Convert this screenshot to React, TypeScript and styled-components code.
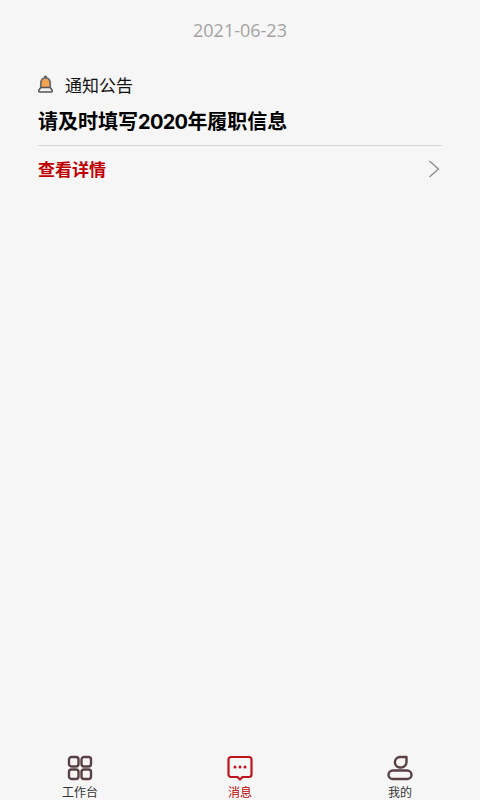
import React from 'react';
import styled, { createGlobalStyle } from 'styled-components';

const GlobalStyle = createGlobalStyle`
  html, body {
    margin: 0;
    padding: 0;
    height: 100%;
    background: #f6f6f6;
    font-family: "Noto Sans CJK SC", "Noto Sans", sans-serif;
  }
  #root {
    height: 100%;
  }
`;

const Page = styled.div`
  height: 800px;
  display: flex;
  flex-direction: column;
  background: #f6f6f6;
`;

const Content = styled.main`
  flex: 1;
  padding: 0 38px;
`;

const DateText = styled.div`
  padding-top: 17px;
  height: 26px;
  line-height: 26px;
  text-align: center;
  font-family: "Open Sans", sans-serif;
  font-size: 18px;
  color: #a3a3a3;
`;

const Notice = styled.section`
  margin-top: 28px;
`;

const NoticeHead = styled.div`
  display: flex;
  align-items: center;
  gap: 12px;
  height: 26px;
  font-size: 17px;
  color: #111;
`;

const NoticeTitle = styled.h2`
  margin: 12px 0 0;
  height: 26px;
  line-height: 26px;
  font-family: "Inter", "Noto Sans CJK SC", sans-serif;
  font-size: 20px;
  font-weight: 700;
  color: #000;
`;

const TitleDigits = styled.span`
  letter-spacing: -0.7px;
`;

const Detail = styled.div`
  margin-top: 10px;
  padding-top: 9px;
  border-top: 1px solid #d8d8d8;
  display: flex;
  align-items: center;
  justify-content: space-between;
  height: 26px;
  font-size: 17px;
  font-weight: 700;
  color: #c00000;

  svg {
    margin-top: 2px;
  }
`;

const TabBar = styled.nav`
  height: 45px;
  display: grid;
  grid-template-columns: repeat(3, 160px);
`;

const Tab = styled.div<{ $active?: boolean }>`
  display: flex;
  flex-direction: column;
  align-items: center;
  gap: 3px;
  font-size: 12px;
  line-height: 16px;
  color: ${(p) => (p.$active ? '#c00000' : '#333')};
`;

const BellIcon = () => (
  <svg width="15" height="18" viewBox="0 0 15 18">
    <circle cx="7.500" cy="2" r="1.600" fill="#555" />
    <path d="M7.500 2.800C10.800 2.800 12.200 5.500 12.200 8.500v4.500H2.800V8.500C2.800 5.500 4.200 2.800 7.500 2.800z" fill="#f2a354" stroke="#6a6a6a" strokeWidth="1.700" />
    <path d="M2.800 12.500L1 15a1.200 1.200 0 0 0 1 2h11a1.200 1.200 0 0 0 1-2l-1.800-2.500z" fill="#f0f0f0" stroke="#555" strokeWidth="1.500" strokeLinejoin="round" />
  </svg>
);

const ChevronIcon = () => (
  <svg width="13" height="18" viewBox="0 0 13 18" fill="none">
    <path d="M0.500 1L9.500 9L0.500 17" stroke="#8a8a8a" strokeWidth="1.300" />
  </svg>
);

const GridIcon = () => (
  <svg width="26" height="26" viewBox="0 0 26 26" fill="none" stroke="#5a4045" strokeWidth="2.400">
    <rect x="2" y="2" width="9.500" height="9.500" rx="2.500" />
    <rect x="14.500" y="2" width="9.500" height="9.500" rx="2.500" />
    <rect x="2" y="14.500" width="9.500" height="9.500" rx="2.500" />
    <rect x="14.500" y="14.500" width="9.500" height="9.500" rx="2.500" />
  </svg>
);

const ChatIcon = () => (
  <svg width="26" height="26" viewBox="0 0 26 26" fill="none">
    <path d="M4 2h18a2.500 2.500 0 0 1 2.500 2.500v15a2.500 2.500 0 0 1-2.500 2.500h-6.500L13 24.500 10.500 22H4a2.500 2.500 0 0 1-2.500-2.500v-15A2.500 2.500 0 0 1 4 2z" stroke="#c0141c" strokeWidth="2.200" strokeLinejoin="round" />
    <circle cx="8" cy="12" r="1.500" fill="#c0141c" />
    <circle cx="13" cy="12" r="1.500" fill="#c0141c" />
    <circle cx="18" cy="12" r="1.500" fill="#c0141c" />
  </svg>
);

const UserIcon = () => (
  <svg width="26" height="26" viewBox="0 0 26 26" fill="none" stroke="#5a4045" strokeWidth="2.400">
    <path d="M19.500 2V7a5.500 5.500 0 0 1-5.500 5.500h-1.500a5.300 5.300 0 0 1 0-10.500z" strokeLinejoin="round" />
    <rect x="1.500" y="15.500" width="23" height="8.500" rx="4.250" />
  </svg>
);

const App: React.FC = () => {
  return (
    <Page>
      <GlobalStyle />
      <Content>
        <DateText>2021-06-23</DateText>
        <Notice>
          <NoticeHead>
            <BellIcon />
            <span>通知公告</span>
          </NoticeHead>
          <NoticeTitle>
            请及时填写<TitleDigits>2020</TitleDigits>年履职信息
          </NoticeTitle>
          <Detail>
            <span>查看详情</span>
            <ChevronIcon />
          </Detail>
        </Notice>
      </Content>
      <TabBar>
        <Tab>
          <GridIcon />
          工作台
        </Tab>
        <Tab $active>
          <ChatIcon />
          消息
        </Tab>
        <Tab>
          <UserIcon />
          我的
        </Tab>
      </TabBar>
    </Page>
  );
};

export default App;
